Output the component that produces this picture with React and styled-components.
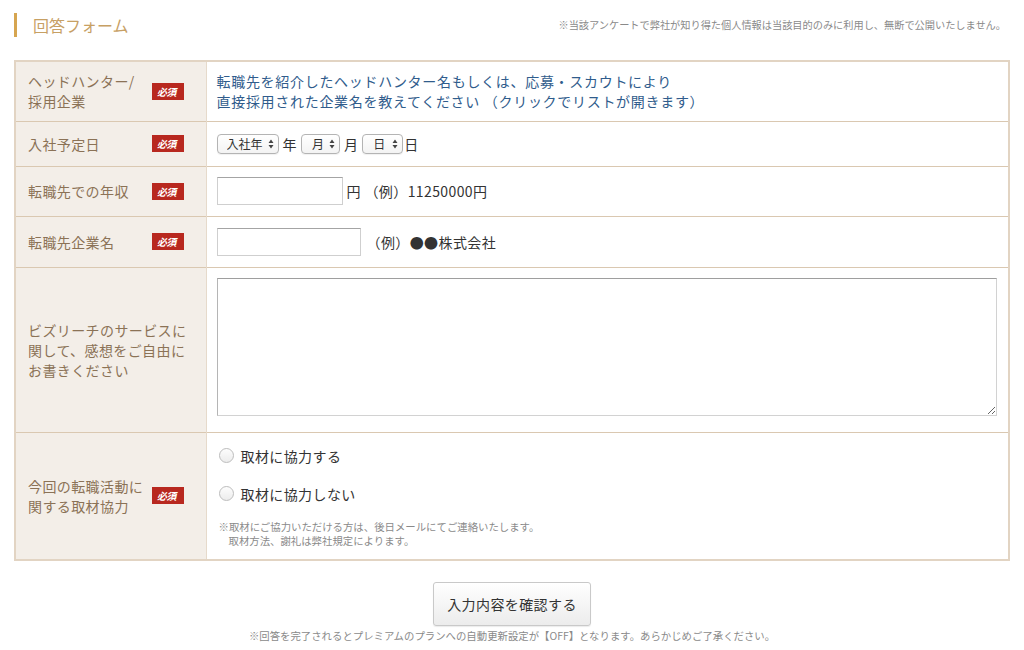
import styled, { createGlobalStyle } from "styled-components";

const GlobalStyle = createGlobalStyle`
body {
  margin: 0;
  background: #fff;
  font-family: "Noto Sans CJK JP", "Noto Sans", sans-serif;
  color: #333;
}
`;

const Page = styled.div`
padding: 0 14px;
`;

const Header = styled.div`
height: 60px;
display: flex;
justify-content: space-between;
align-items: flex-start;
padding-top: 13px;
box-sizing: border-box;
`;

const Title = styled.h2`
margin: 0;
height: 24px;
padding-left: 16px;
border-left: 3px solid #d6a550;
font-size: 16px;
font-weight: 400;
line-height: 24px;
color: #c7a064;
`;

const HeadNote = styled.p`
margin: 4px 4px 0 0;
font-size: 10.2px;
color: #8a8a8a;
`;

const Table = styled.table`
width: 100%;
table-layout: fixed;
border-collapse: collapse;
border: 2px solid #e2d4c3;
`;

const Row = styled.tr`
height: ${p => p.$h}px;
border-bottom: 1px solid #dac8b1;
`;

const LabelCell = styled.th`
width: 191px;
box-sizing: border-box;
padding: 0 ${p => (p.$plain ? "4px" : "22px")} 0 12px;
background: #f3eee8;
text-align: left;
font-weight: 400;
vertical-align: middle;
border-right: 1px solid #e6dacb;
`;

const LabelInner = styled.div`
display: flex;
align-items: center;
justify-content: space-between;
`;

const LabelText = styled.span`
white-space: nowrap;
font-size: 14px;
line-height: 20px;
letter-spacing: 0.4px;
color: #8b7256;
`;

const Required = styled.span`
flex: none;
width: 32px;
height: 17px;
background: #b8281f;
color: #fff;
font-size: 10px;
font-weight: 700;
line-height: 17px;
text-align: center;
letter-spacing: -0.5px;
`;

const Slant = styled.span`
display: inline-block;
transform: skewX(-12deg);
`;

const ValueCell = styled.td`
padding: ${p => p.$pad || "0 11px 0 10px"};
vertical-align: middle;
font-size: 14px;
line-height: 20px;
letter-spacing: 0.4px;
`;

const LinkText = styled.p`
margin: 0;
color: #305c8c;
font-size: 14px;
line-height: 20px;
letter-spacing: 0.7px;
`;

const Line = styled.div`
display: flex;
align-items: center;
gap: ${p => p.$gap || 4}px;
color: #333;
`;

const SelectWrap = styled.span`
position: relative;
display: inline-flex;
`;

const Select = styled.select`
appearance: none;
-webkit-appearance: none;
width: ${p => p.$w}px;
height: 20px;
padding: 0 0 0 ${p => p.$pl}px;
border: 1px solid #b4b4b4;
border-radius: 4px;
background: linear-gradient(#fff, #f3f3f3);
font-family: inherit;
font-size: 12px;
color: #333;
box-shadow: 0 1px 1px rgba(0, 0, 0, 0.06);
`;

const Arrows = styled.svg`
position: absolute;
right: 5px;
top: 5px;
pointer-events: none;
`;

const TextInput = styled.input`
width: ${p => p.$w}px;
height: 28px;
box-sizing: border-box;
border: 1px solid #cfcfcf;
border-top-color: #a4a4a4;
font-family: inherit;
font-size: 14px;
padding: 0 4px;
`;

const TextArea = styled.textarea`
display: block;
width: 100%;
height: 138px;
box-sizing: border-box;
border: 1px solid #d2d2d2;
border-top-color: #9e9e9e;
border-left-color: #b5b5b5;
font-family: inherit;
font-size: 14px;
resize: both;
`;

const RadioList = styled.div`
display: flex;
flex-direction: column;
gap: 18px;
padding-left: 2px;
`;

const RadioLabel = styled.label`
display: flex;
align-items: center;
gap: 7px;
font-size: 14px;
line-height: 20px;
color: #333;
`;

const Radio = styled.span`
width: 13px;
height: 13px;
border-radius: 50%;
border: 1px solid #bdbdbd;
background: linear-gradient(#fdfdfd, #ececec);
`;

const SmallNote = styled.p`
margin: 16px 0 0 2px;
font-size: 10.4px;
line-height: 14px;
letter-spacing: 0;
color: #8a8a8a;
`;

const Indent = styled.span`
padding-left: 10px;
`;

const Footer = styled.div`
display: flex;
flex-direction: column;
align-items: center;
padding-top: 21px;
`;

const Button = styled.button`
width: 158px;
height: 44px;
border: 1px solid #c9c9c9;
border-radius: 3px;
background: linear-gradient(#ffffff, #ececec);
font-family: inherit;
font-size: 14px;
letter-spacing: 0.4px;
color: #333;
box-shadow: 0 1px 1px rgba(0, 0, 0, 0.08);
cursor: pointer;
`;

const FooterNote = styled.p`
margin: 2px 0 0;
font-size: 10.4px;
color: #8a8a8a;
`;

const UpDown = () => (
  <Arrows width="6" height="10" viewBox="0 0 6 10">
    <path d="M3 0.5 L5.5 4 H0.5 Z M3 9.5 L5.5 6 H0.5 Z" fill="#444" />
  </Arrows>
);

const DateSelect = ({ label, w, pl }) => (
  <SelectWrap>
    <Select $w={w} $pl={pl} defaultValue="">
      <option value="">{label}</option>
    </Select>
    <UpDown />
  </SelectWrap>
);

const Label = ({ children, required = true }) => (
  <LabelCell $plain={!required}>
    <LabelInner>
      <LabelText>{children}</LabelText>
      {required && (
        <Required>
          <Slant>必須</Slant>
        </Required>
      )}
    </LabelInner>
  </LabelCell>
);

const App = () => {
  return (
    <Page>
      <GlobalStyle />
      <Header>
        <Title>回答フォーム</Title>
        <HeadNote>※当該アンケートで弊社が知り得た個人情報は当該目的のみに利用し、無断で公開いたしません。</HeadNote>
      </Header>

      <Table>
        <tbody>
          <Row $h={60}>
            <Label>
              ヘッドハンター/
              <br />
              採用企業
            </Label>
            <ValueCell>
              <LinkText>
                転職先を紹介したヘッドハンター名もしくは、応募・スカウトにより
                <br />
                直接採用された企業名を教えてください （クリックでリストが開きます）
              </LinkText>
            </ValueCell>
          </Row>
          <Row $h={45}>
            <Label>入社予定日</Label>
            <ValueCell>
              <Line $gap={4}>
                <DateSelect label="入社年" w={62} pl={9} />
                <span>年</span>
                <DateSelect label="月" w={39} pl={10} />
                <span>月</span>
                <DateSelect label="日" w={41} pl={10} />
                <span style={{ marginLeft: -3 }}>日</span>
              </Line>
            </ValueCell>
          </Row>
          <Row $h={50}>
            <Label>転職先での年収</Label>
            <ValueCell>
              <Line $gap={4}>
                <TextInput $w={126} type="text" />
                <span>円 （例）11250000円</span>
              </Line>
            </ValueCell>
          </Row>
          <Row $h={51}>
            <Label>転職先企業名</Label>
            <ValueCell>
              <Line $gap={6}>
                <TextInput $w={144} type="text" />
                <span>（例）●●株式会社</span>
              </Line>
            </ValueCell>
          </Row>
          <Row $h={164}>
            <Label required={false}>
              ビズリーチのサービスに
              <br />
              関して、感想をご自由に
              <br />
              お書きください
            </Label>
            <ValueCell $pad="10px 11px 16px 10px">
              <TextArea />
            </ValueCell>
          </Row>
          <Row $h={128}>
            <Label>
              今回の転職活動に
              <br />
              関する取材協力
            </Label>
            <ValueCell $pad="12px 11px 10px 10px">
              <RadioList>
                <RadioLabel>
                  <Radio />
                  取材に協力する
                </RadioLabel>
                <RadioLabel>
                  <Radio />
                  取材に協力しない
                </RadioLabel>
              </RadioList>
              <SmallNote>
                ※取材にご協力いただける方は、後日メールにてご連絡いたします。
                <br />
                <Indent>取材方法、謝礼は弊社規定によります。</Indent>
              </SmallNote>
            </ValueCell>
          </Row>
        </tbody>
      </Table>

      <Footer>
        <Button type="button">入力内容を確認する</Button>
        <FooterNote>※回答を完了されるとプレミアムのプランへの自動更新設定が【OFF】となります。あらかじめご了承ください。</FooterNote>
      </Footer>
    </Page>
  );
};

export default App;
